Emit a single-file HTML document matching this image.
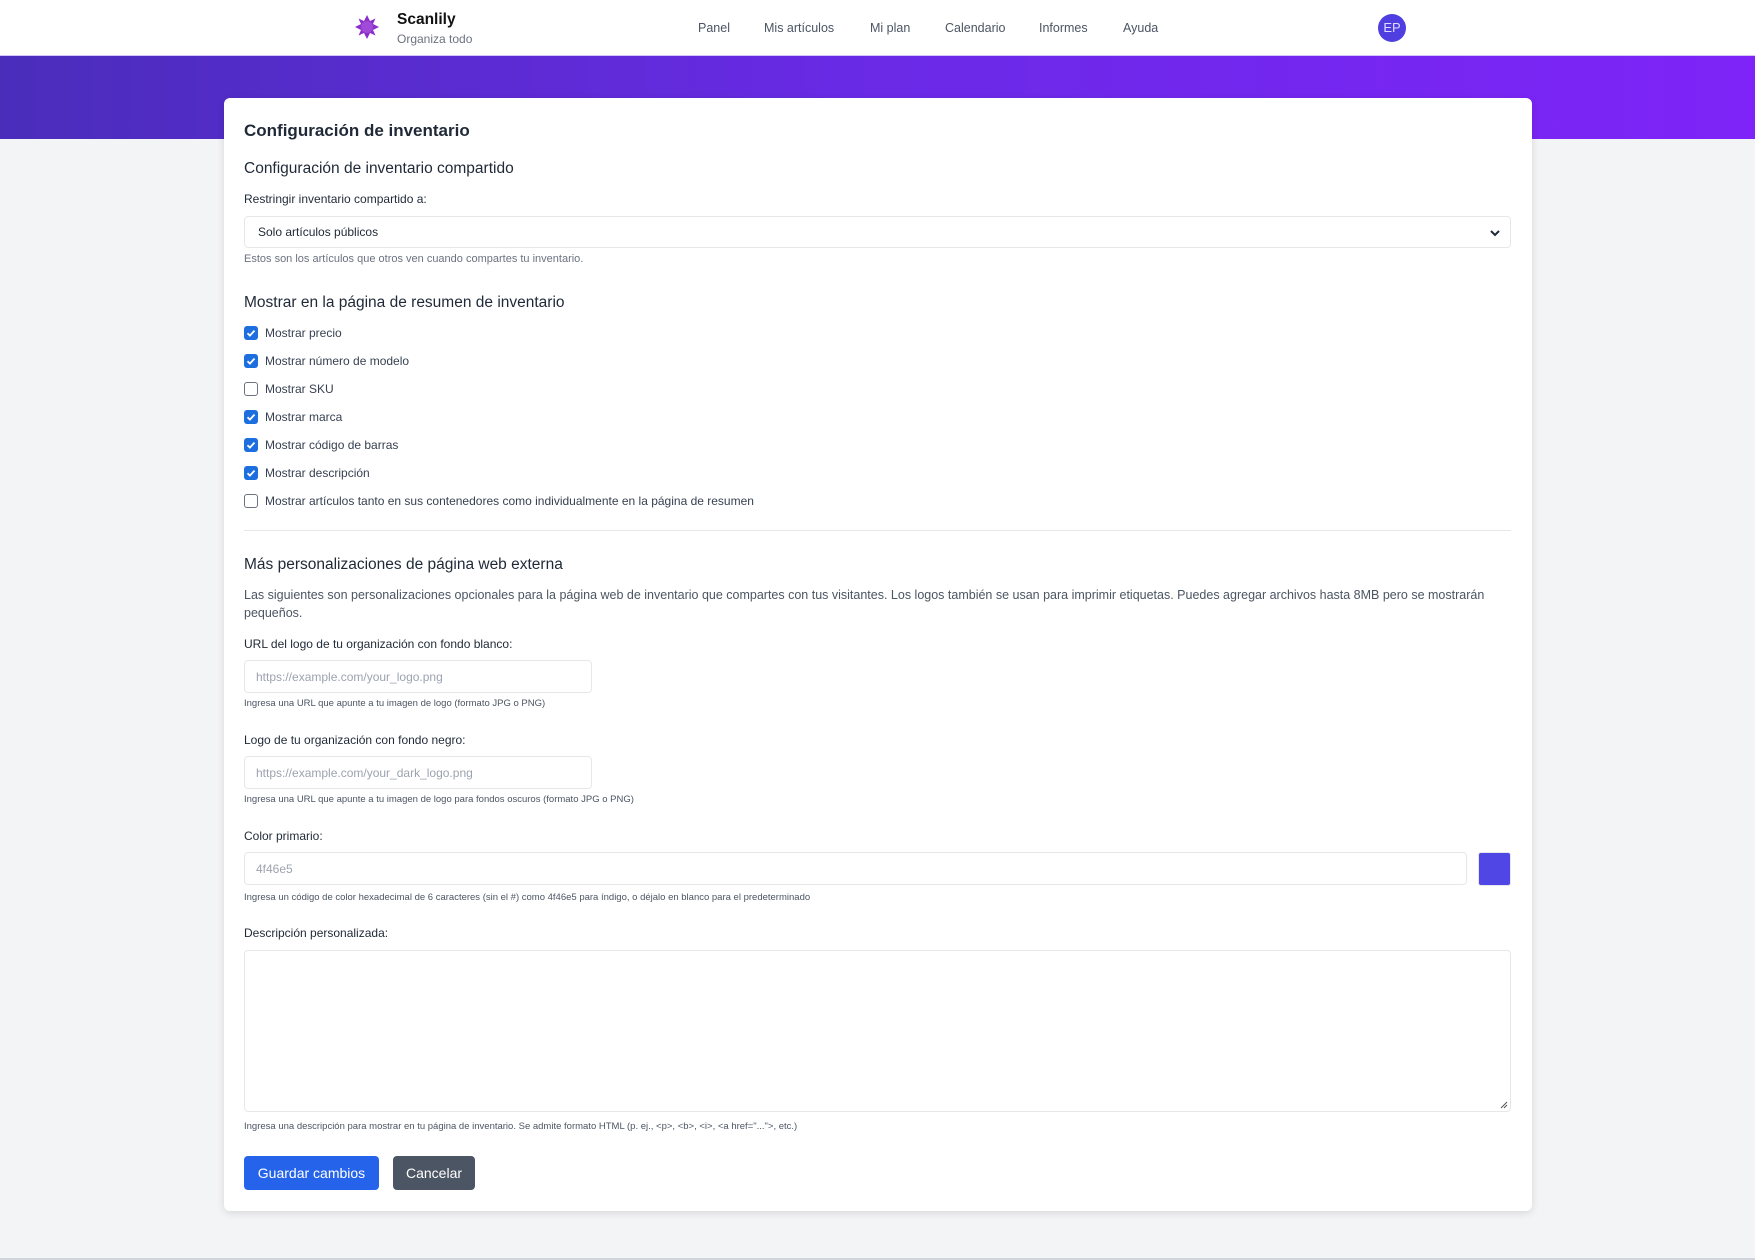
<!DOCTYPE html>
<html><head><meta charset="utf-8"><style>
*{box-sizing:border-box;margin:0;padding:0}
body{width:1755px;height:1260px;background:#f3f4f6;font-family:"Liberation Sans",sans-serif;position:relative;overflow:hidden;color:#1f2937}
.a{position:absolute;white-space:nowrap}
nav{position:absolute;left:0;top:0;width:1755px;height:56px;background:#fff;border-bottom:1px solid #d8c4f7}
.band{position:absolute;left:0;top:56px;width:1755px;height:83px;background:linear-gradient(90deg,#4a2dbb,#6a2ae6 50%,#7e24f8)}
.card{position:absolute;left:224px;top:98px;width:1308px;height:1113px;background:#fff;border-radius:6px;box-shadow:0 2px 8px rgba(0,0,0,.12)}
.nl{font-size:12.5px;color:#4b5563;top:21px}
.lbl{font-size:12px;color:#1f2937}
.help{font-size:11px;color:#6b7280}
.sm{font-size:9.5px;color:#4b5563}
.inp{position:absolute;border:1px solid #e5e7eb;border-radius:4px;background:#fff;font-size:12px;color:#9ca3af;padding-left:11px;display:flex;align-items:center}
.cb{position:absolute;left:244px;width:14px;height:14px;border-radius:3px}
.on{background:#1d6fe0}
.off{border:1px solid #6b7280;background:#fff}
.ct{position:absolute;left:265px;font-size:12px;color:#374151;white-space:nowrap}
</style></head><body>
<nav>
<svg class="a" style="left:354px;top:14px" width="26" height="26" viewBox="0 0 26 26"><g fill="#8b2fc9" transform="translate(13 13)"><polygon points="0,-12 3,-6 8.5,-8.5 6,-3 12,0 6,3 8.5,8.5 3,6 0,12 -3,6 -8.5,8.5 -6,3 -12,0 -6,-3 -8.5,-8.5 -3,-6"/><circle r="6" fill="#a04ad8"/></g></svg>
<div class="a" style="left:397px;top:11px;font-size:15.5px;font-weight:bold;color:#111">Scanlily</div>
<div class="a" style="left:397px;top:32px;font-size:12px;color:#6b7280">Organiza todo</div>
<div class="a nl" style="left:698px">Panel</div>
<div class="a nl" style="left:764px">Mis artículos</div>
<div class="a nl" style="left:870px">Mi plan</div>
<div class="a nl" style="left:945px">Calendario</div>
<div class="a nl" style="left:1039px">Informes</div>
<div class="a nl" style="left:1123px">Ayuda</div>
<div class="a" style="left:1378px;top:14px;width:28px;height:28px;border-radius:50%;background:#4f3ee0;color:#e0dcff;font-size:13px;text-align:center;line-height:28px">EP</div>
</nav>
<div class="band"></div>
<div class="card"></div>
<div class="a" style="left:244px;top:121px;font-size:17px;font-weight:bold;color:#1f2937">Configuración de inventario</div>
<div class="a" style="left:244px;top:160px;font-size:15.5px;color:#1f2937">Configuración de inventario compartido</div>
<div class="a lbl" style="top:192px;left:244px">Restringir inventario compartido a:</div>
<div class="inp" style="left:244px;top:216px;width:1267px;height:32px;color:#1f2937;padding-left:13px">Solo artículos públicos
<svg style="position:absolute;right:10px;top:12px" width="10" height="8" viewBox="0 0 10 8"><path d="M1 2l4 4 4-4" stroke="#1f2937" stroke-width="2" fill="none"/></svg></div>
<div class="a help" style="left:244px;top:253px">Estos son los artículos que otros ven cuando compartes tu inventario.</div>
<div class="a" style="left:244px;top:294px;font-size:15.5px;color:#1f2937">Mostrar en la página de resumen de inventario</div>

<div class="cb on" style="top:326px"><svg width="14" height="14"><path d="M3.5 7.2l2.4 2.4 4.6-5" stroke="#fff" stroke-width="1.8" fill="none"/></svg></div><div class="ct" style="top:326px">Mostrar precio</div>
<div class="cb on" style="top:354px"><svg width="14" height="14"><path d="M3.5 7.2l2.4 2.4 4.6-5" stroke="#fff" stroke-width="1.8" fill="none"/></svg></div><div class="ct" style="top:354px">Mostrar número de modelo</div>
<div class="cb off" style="top:382px"></div><div class="ct" style="top:382px">Mostrar SKU</div>
<div class="cb on" style="top:410px"><svg width="14" height="14"><path d="M3.5 7.2l2.4 2.4 4.6-5" stroke="#fff" stroke-width="1.8" fill="none"/></svg></div><div class="ct" style="top:410px">Mostrar marca</div>
<div class="cb on" style="top:438px"><svg width="14" height="14"><path d="M3.5 7.2l2.4 2.4 4.6-5" stroke="#fff" stroke-width="1.8" fill="none"/></svg></div><div class="ct" style="top:438px">Mostrar código de barras</div>
<div class="cb on" style="top:466px"><svg width="14" height="14"><path d="M3.5 7.2l2.4 2.4 4.6-5" stroke="#fff" stroke-width="1.8" fill="none"/></svg></div><div class="ct" style="top:466px">Mostrar descripción</div>
<div class="cb off" style="top:494px"></div><div class="ct" style="top:494px">Mostrar artículos tanto en sus contenedores como individualmente en la página de resumen</div>

<div class="a" style="left:244px;top:530px;width:1267px;height:1px;background:#e5e7eb"></div>
<div class="a" style="left:244px;top:556px;font-size:15.5px;color:#1f2937">Más personalizaciones de página web externa</div>
<div class="a" style="left:244px;top:586px;width:1267px;white-space:normal;font-size:12.5px;line-height:18px;color:#4b5563">Las siguientes son personalizaciones opcionales para la página web de inventario que compartes con tus visitantes. Los logos también se usan para imprimir etiquetas. Puedes agregar archivos hasta 8MB pero se mostrarán pequeños.</div>
<div class="a lbl" style="left:244px;top:637px">URL del logo de tu organización con fondo blanco:</div>
<div class="inp" style="left:244px;top:660px;width:348px;height:33px">https://example.com/your_logo.png</div>
<div class="a sm" style="left:244px;top:698px">Ingresa una URL que apunte a tu imagen de logo (formato JPG o PNG)</div>
<div class="a lbl" style="left:244px;top:733px">Logo de tu organización con fondo negro:</div>
<div class="inp" style="left:244px;top:756px;width:348px;height:33px">https://example.com/your_dark_logo.png</div>
<div class="a sm" style="left:244px;top:794px">Ingresa una URL que apunte a tu imagen de logo para fondos oscuros (formato JPG o PNG)</div>
<div class="a lbl" style="left:244px;top:829px">Color primario:</div>
<div class="inp" style="left:244px;top:852px;width:1223px;height:33px">4f46e5</div>
<div class="a" style="left:1478px;top:852px;width:33px;height:34px;background:#4f46e5;border-radius:3px;border:1px solid #e5e7eb"></div>
<div class="a" style="left:244px;top:892px;font-size:9.5px;color:#4b5563">Ingresa un código de color hexadecimal de 6 caracteres (sin el #) como 4f46e5 para índigo, o déjalo en blanco para el predeterminado</div>
<div class="a lbl" style="left:244px;top:926px">Descripción personalizada:</div>
<div class="inp" style="left:244px;top:950px;width:1267px;height:162px"><svg style="position:absolute;right:2px;bottom:2px" width="8" height="8"><path d="M1 7L7 1M4 7L7 4" stroke="#555" stroke-width="1"/></svg></div>
<div class="a" style="left:244px;top:1121px;font-size:9.5px;color:#4b5563">Ingresa una descripción para mostrar en tu página de inventario. Se admite formato HTML (p. ej., &lt;p&gt;, &lt;b&gt;, &lt;i&gt;, &lt;a href="..."&gt;, etc.)</div>
<div class="a" style="left:244px;top:1156px;width:135px;height:34px;background:#2563eb;border-radius:4px;color:#fff;font-size:14px;text-align:center;line-height:34px">Guardar cambios</div>
<div class="a" style="left:393px;top:1156px;width:82px;height:34px;background:#4b5563;border-radius:4px;color:#fff;font-size:14px;text-align:center;line-height:34px">Cancelar</div>
<div class="a" style="left:0;top:1258px;width:1755px;height:2px;background:#d1d5db"></div>
</body></html>
